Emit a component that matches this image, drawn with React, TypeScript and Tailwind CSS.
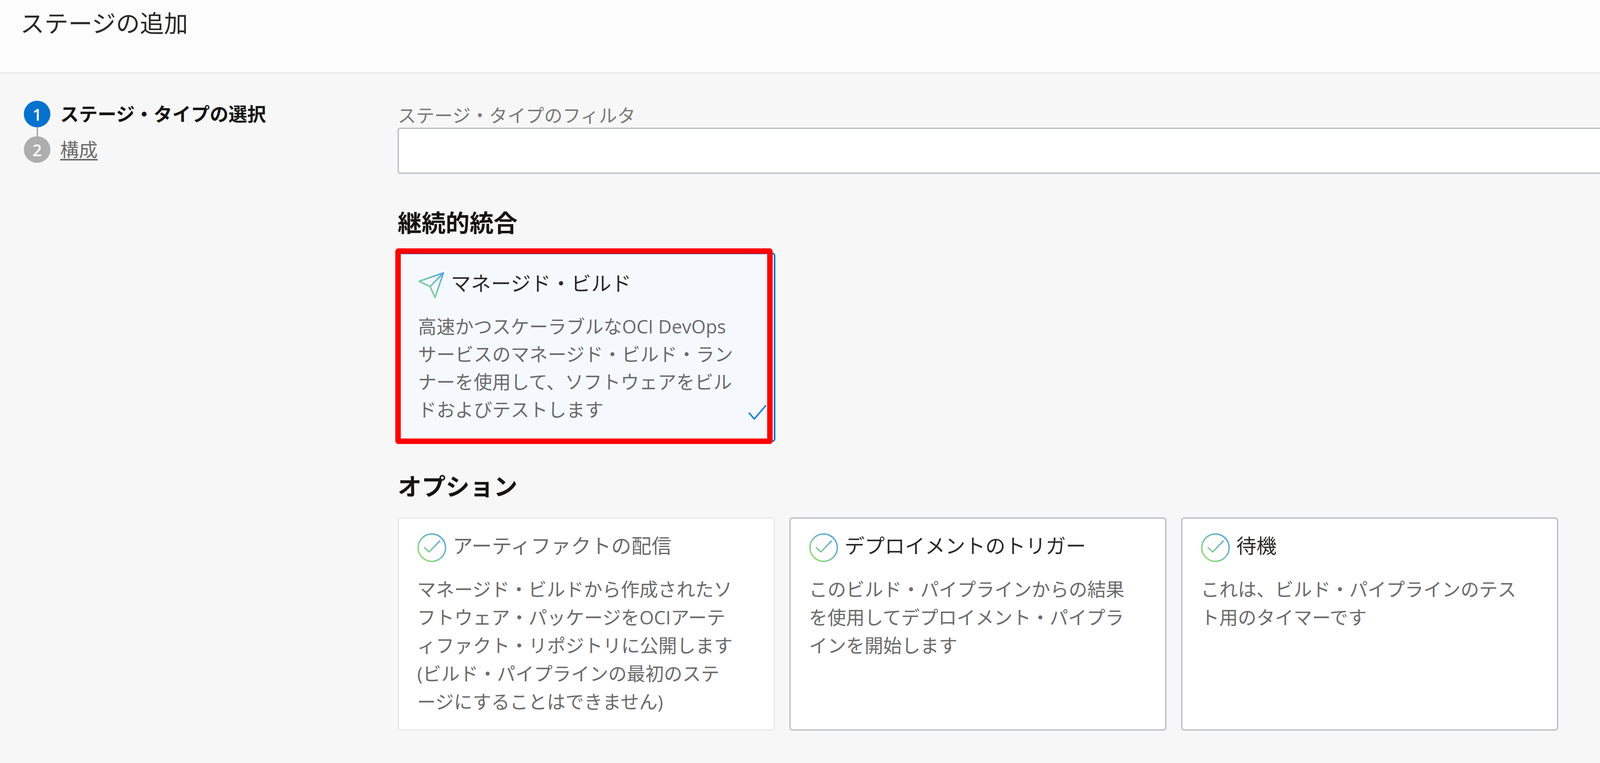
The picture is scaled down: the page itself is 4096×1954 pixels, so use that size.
import React from "react";

const CheckCircle = ({ id }: { id: string }) => (
  <svg width="75" height="75" viewBox="0 0 76 76" fill="none" className="shrink-0">
    <defs>
      <linearGradient id={id} x1="68" y1="8" x2="10" y2="68" gradientUnits="userSpaceOnUse">
        <stop offset="0" stopColor="#4a9fe8" />
        <stop offset="1" stopColor="#93dc68" />
      </linearGradient>
    </defs>
    <circle cx="38" cy="38" r="35.5" stroke={`url(#${id})`} strokeWidth="3.5" />
    <path d="M19 38 L31 49 L58 21" stroke={`url(#${id})`} strokeWidth="3.5" strokeLinecap="round" strokeLinejoin="round" />
  </svg>
);

const Plane = () => (
  <svg width="68" height="69" viewBox="0 0 70 71" fill="none" className="shrink-0">
    <defs>
      <linearGradient id="plane" x1="66" y1="3" x2="22" y2="52" gradientUnits="userSpaceOnUse">
        <stop offset="0" stopColor="#5aa6f0" />
        <stop offset="1" stopColor="#7fd28c" />
      </linearGradient>
    </defs>
    <path d="M67 3 L3 25 L32 39 L45 68 Z M32 39 L67 3" stroke="url(#plane)" strokeWidth="4" strokeLinejoin="round" strokeLinecap="round" />
  </svg>
);

const options = [
  {
    id: "c1",
    title: "アーティファクトの配信",
    titleClass: "text-[#6b6b6b]",
    cardClass: "border-[#e6e6e6]",
    lines: [
      "マネージド・ビルドから作成されたソ",
      "フトウェア・パッケージをOCIアーテ",
      "ィファクト・リポジトリに公開します",
      "(ビルド・パイプラインの最初のステ",
      "ージにすることはできません)",
    ],
  },
  {
    id: "c2",
    title: "デプロイメントのトリガー",
    titleClass: "text-[#2b2a28]",
    cardClass: "border-[#b4b9c2]",
    lines: ["このビルド・パイプラインからの結果", "を使用してデプロイメント・パイプラ", "インを開始します"],
  },
  {
    id: "c3",
    title: "待機",
    titleClass: "text-[#2b2a28]",
    cardClass: "border-[#b4b9c2]",
    lines: ["これは、ビルド・パイプラインのテス", "ト用のタイマーです"],
  },
];

export default function App() {
  return (
    <div className="w-[4096px] h-[1954px] overflow-hidden bg-[#f7f7f7] font-['Open_Sans','Noto_Sans_CJK_JP',sans-serif]">
      <header className="h-[188px] border-b-[3px] border-[#e8e8e8] bg-[#fcfcfc] pl-[52px] pt-[23px]">
        <h1 className="text-[61.5px] leading-[72px] font-normal text-[#2b2a28]">ステージの追加</h1>
      </header>
      <div className="flex">
        <aside className="w-[1018px] shrink-0 pl-[61px] pt-[70px]">
          <div className="flex items-center gap-[25px] h-[68px]">
            <span className="flex h-[68px] w-[68px] items-center justify-center rounded-full bg-[#0572ce] text-[42px] font-semibold text-white">1</span>
            <span className="text-[48px] leading-[68px] font-bold text-[#161513]">ステージ・タイプの選択</span>
          </div>
          <div className="ml-[33px] h-[23px] w-[3px] bg-[#9a9a9a]" />
          <div className="flex items-center gap-[25px] h-[68px]">
            <span className="flex h-[68px] w-[68px] items-center justify-center rounded-full bg-[#adadad] text-[42px] font-semibold text-white">2</span>
            <span className="text-[48px] leading-[68px] text-[#6b6b6b] underline underline-offset-[6px]">構成</span>
          </div>
        </aside>
        <main className="min-w-0 flex-1 pt-[77px]">
          <label className="block text-[47px] leading-[60px] text-[#7a7a7a]">ステージ・タイプのフィルタ</label>
          <div className="mt-[2px] h-[118px] w-[3300px] rounded-[6px] border-[3px] border-[#b4b9c2] bg-white" />
          <h2 className="mt-[89px] text-[61.4px] leading-[72px] font-bold text-[#161513]">継続的統合</h2>
          <div className="relative mt-[41px] h-[485px] w-[967px]">
            <div className="h-full rounded-[8px] border-[4px] border-[#0572ce] bg-[#f5f9fe] pl-[48px] pt-[45px]">
              <div className="flex items-start gap-[16px]">
                <Plane />
                <span className="text-[51.5px] leading-[59px] text-[#2b2a28]">マネージド・ビルド</span>
              </div>
              <p className="mt-[35px] text-[47.5px] leading-[71px] text-[#6b6b6b] whitespace-nowrap">
                高速かつスケーラブルなOCI DevOps
                <br />
                サービスのマネージド・ビルド・ラン
                <br />
                ナーを使用して、ソフトウェアをビル
                <br />
                ドおよびテストします
              </p>
            </div>
            <svg width="48" height="42" viewBox="0 0 48 42" fill="none" className="absolute left-[897px] top-[389px]">
              <path d="M3 22 L16 37 L45 3" stroke="#1f80d8" strokeWidth="4" strokeLinecap="round" strokeLinejoin="round" />
            </svg>
            <div className="absolute -left-[6px] -top-[11px] h-[501px] w-[966px] rounded-[8px] border-[14px] border-[#ff0000]" />
          </div>
          <h2 className="mt-[77px] text-[61.4px] leading-[72px] font-bold text-[#161513]">オプション</h2>
          <div className="mt-[44px] flex gap-[38px]">
            {options.map((o) => (
              <div key={o.id} className={`h-[546px] w-[965px] rounded-[8px] border-[3px] bg-white pl-[47px] pt-[37px] ${o.cardClass}`}>
                <div className="flex items-start gap-[16px]">
                  <CheckCircle id={o.id} />
                  <span className={`text-[51.5px] leading-[65px] ${o.titleClass}`}>{o.title}</span>
                </div>
                <p className="mt-[33px] text-[47.5px] leading-[72px] text-[#6b6b6b] whitespace-nowrap">
                  {o.lines.map((l) => (
                    <span key={l} className="block">
                      {l}
                    </span>
                  ))}
                </p>
              </div>
            ))}
          </div>
        </main>
      </div>
    </div>
  );
}
